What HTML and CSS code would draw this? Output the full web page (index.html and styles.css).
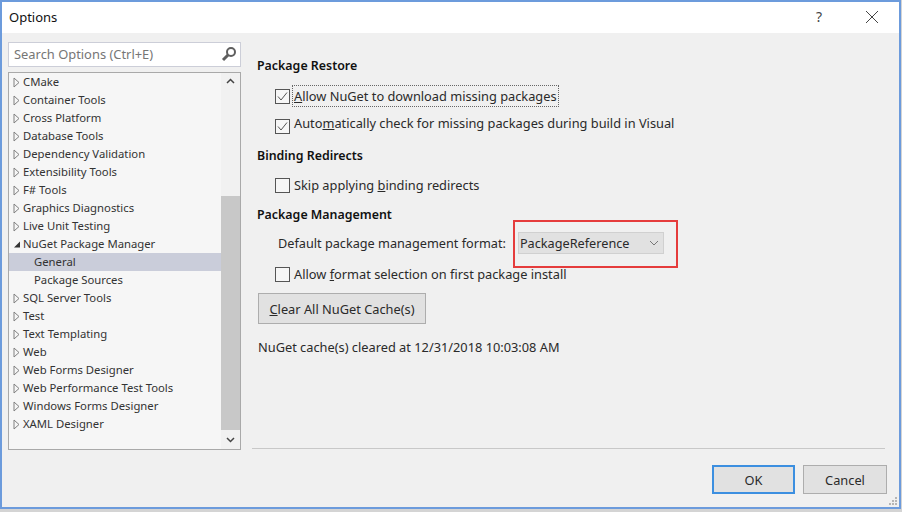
FILE: index.html
```html
<!DOCTYPE html>
<html>
<head>
  <meta charset="utf-8">
  <title>Options</title>
  <link rel="stylesheet" href="styles.css">
</head>
<body>
  <svg class="defs" width="0" height="0">
    <symbol id="tri" viewBox="0 0 7 11"><path d="M1 1L6 5.5L1 10Z" stroke="#808080" stroke-width="1" fill="none"/></symbol>
    <symbol id="tick" viewBox="0 0 13 13"><path d="M2 6.5L5 10L11 2.5" stroke="#555" stroke-width="1" fill="none"/></symbol>
  </svg>
  <div class="dialog">
    <div class="titlebar">
      <span class="title">Options</span>
      <span class="help">?</span>
      <svg class="close" width="14" height="14" viewBox="0 0 14 14"><path d="M1 1L13 13M13 1L1 13" stroke="#444" stroke-width="1" fill="none"/></svg>
    </div>

    <div class="main">
      <div class="sidebar">
        <div class="search">
          <span class="search-text">Search Options (Ctrl+E)</span>
          <svg width="16" height="16" viewBox="0 0 16 16"><circle cx="10" cy="6" r="4" fill="none" stroke="#5f5f5f" stroke-width="2"/><path d="M7 9L2 14" stroke="#5f5f5f" stroke-width="3"/></svg>
        </div>
        <div class="tree">
          <ul class="tree-list">
            <li class="node"><svg class="arrow"><use href="#tri"/></svg>CMake</li>
            <li class="node"><svg class="arrow"><use href="#tri"/></svg>Container Tools</li>
            <li class="node"><svg class="arrow"><use href="#tri"/></svg>Cross Platform</li>
            <li class="node"><svg class="arrow"><use href="#tri"/></svg>Database Tools</li>
            <li class="node"><svg class="arrow"><use href="#tri"/></svg>Dependency Validation</li>
            <li class="node"><svg class="arrow"><use href="#tri"/></svg>Extensibility Tools</li>
            <li class="node"><svg class="arrow"><use href="#tri"/></svg>F# Tools</li>
            <li class="node"><svg class="arrow"><use href="#tri"/></svg>Graphics Diagnostics</li>
            <li class="node"><svg class="arrow"><use href="#tri"/></svg>Live Unit Testing</li>
            <li class="node"><svg class="arrow" viewBox="0 0 7 11"><path d="M1 8.5H7V2.5Z" fill="#333"/></svg>NuGet Package Manager</li>
            <li class="node child selected">General</li>
            <li class="node child">Package Sources</li>
            <li class="node"><svg class="arrow"><use href="#tri"/></svg>SQL Server Tools</li>
            <li class="node"><svg class="arrow"><use href="#tri"/></svg>Test</li>
            <li class="node"><svg class="arrow"><use href="#tri"/></svg>Text Templating</li>
            <li class="node"><svg class="arrow"><use href="#tri"/></svg>Web</li>
            <li class="node"><svg class="arrow"><use href="#tri"/></svg>Web Forms Designer</li>
            <li class="node"><svg class="arrow"><use href="#tri"/></svg>Web Performance Test Tools</li>
            <li class="node"><svg class="arrow"><use href="#tri"/></svg>Windows Forms Designer</li>
            <li class="node"><svg class="arrow"><use href="#tri"/></svg>XAML Designer</li>
          </ul>
          <div class="scrollbar">
            <svg class="scroll-btn" width="19" height="16" viewBox="0 0 19 16"><path d="M6 10L9.5 6.5L13 10" stroke="#444" stroke-width="1.5" fill="none"/></svg>
            <div class="scroll-track"><div class="scroll-thumb"></div></div>
            <svg class="scroll-btn" width="19" height="19" viewBox="0 0 19 19"><path d="M6 8L9.5 11.5L13 8" stroke="#444" stroke-width="1.5" fill="none"/></svg>
          </div>
        </div>
      </div>

      <div class="content">
        <h3 class="heading first">Package Restore</h3>
        <div class="check-row first-check">
          <span class="box"><svg width="13" height="13"><use href="#tick"/></svg></span>
          <span class="focused"><u>A</u>llow NuGet to download missing packages</span>
        </div>
        <div class="check-row second-check">
          <span class="box low"><svg width="13" height="13"><use href="#tick"/></svg></span>
          <span>Auto<u>m</u>atically check for missing packages during build in Visual</span>
        </div>
        <h3 class="heading redirects">Binding Redirects</h3>
        <div class="check-row skip">
          <span class="box"></span>
          <span>Skip applying <u>b</u>inding redirects</span>
        </div>
        <h3 class="heading management">Package Management</h3>
        <div class="format-row">
          <span>Default package management format:</span>
          <div class="combo">
            <span>PackageReference</span>
            <svg width="10" height="6" viewBox="0 0 10 6"><path d="M1 1L5 5L9 1" stroke="#777" stroke-width="1" fill="none"/></svg>
            <div class="callout"></div>
          </div>
        </div>
        <div class="check-row allow-format">
          <span class="box"></span>
          <span>Allow <u>f</u>ormat selection on first package install</span>
        </div>
        <button class="btn clear"><u>C</u>lear All NuGet Cache(s)</button>
        <p class="status">NuGet cache(s) cleared at 12/31/2018 10:03:08 AM</p>
      </div>
    </div>

    <div class="footer">
      <button class="btn action ok">OK</button>
      <button class="btn action">Cancel</button>
      <svg class="grip" width="9" height="9" viewBox="0 0 9 9"><path d="M7 1h2v2H7zM4 4h2v2H4zM7 4h2v2H7zM1 7h2v2H1zM4 7h2v2H4zM7 7h2v2H7z" fill="#b5b5b5"/></svg>
    </div>
  </div>
</body>
</html>
```

FILE: styles.css
```css
* {
  box-sizing: border-box;
}

html, body {
  margin: 0;
  height: 100%;
}

body {
  background: #d4d4d4;
  font-family: "Noto Sans", "Open Sans", sans-serif;
  font-size: 12.8px;
  color: #2a2a2a;
  overflow: hidden;
}

.defs {
  display: block;
  height: 0;
}

.dialog {
  width: 901px;
  height: 509px;
  background: #f0f0f0;
  border: 2px solid #6c9bdc;
  display: flex;
  flex-direction: column;
}

/* title bar */
.titlebar {
  height: 31px;
  flex: none;
  background: #fff;
  display: flex;
  align-items: center;
  padding: 0 20px 2px 7px;
}

.title {
  font-size: 13px;
  color: #111;
  flex: 1;
}

.help {
  font-size: 14px;
  color: #444;
  margin-right: 43px;
}

/* left side */
.main {
  flex: 1;
  display: flex;
  min-height: 0;
}

.sidebar {
  width: 233px;
  margin: 9px 0 0 6px;
  flex: none;
}

.search {
  height: 25px;
  background: #fff;
  border: 1px solid #ccced8;
  display: flex;
  align-items: center;
  justify-content: space-between;
  padding: 0 3px 1px 5px;
  margin-bottom: 5px;
}

.search-text {
  font-size: 12.9px;
  color: #767676;
}

.tree {
  height: 378px;
  background: #f6f6f6;
  border: 1px solid #a9a9a9;
  display: flex;
}

.tree-list {
  flex: 1;
  list-style: none;
  margin: 0;
  padding: 0;
}

.node {
  height: 18px;
  line-height: 18px;
  font-size: 11.3px;
  padding-left: 4px;
  color: #333;
  white-space: nowrap;
  display: flex;
  align-items: center;
}

.node.child {
  padding-left: 25px;
}

.node.selected {
  background: #cacdda;
}

.arrow {
  width: 7px;
  height: 11px;
  flex: none;
  margin-right: 3px;
}

.scrollbar {
  width: 19px;
  flex: none;
  display: flex;
  flex-direction: column;
  background: #f1f1f1;
}

.scroll-btn {
  flex: none;
  display: block;
}

.scroll-track {
  flex: 1;
  display: flex;
  flex-direction: column;
  justify-content: flex-end;
}

.scroll-thumb {
  height: 234px;
  background: #c8c8c8;
}

/* right side */
.content {
  flex: 1;
  padding: 0 0 0 16px;
  min-width: 0;
}

.heading {
  margin: 0;
  height: 18px;
  line-height: 18px;
  font-size: 12.4px;
  font-weight: 600;
  color: #111;
}

.heading.first {
  margin-top: 24px;
}

.heading.redirects {
  margin-top: 15px;
}

.heading.management {
  margin-top: 12px;
}

.check-row {
  display: flex;
  align-items: center;
  padding-left: 18px;
  gap: 4px;
  height: 18px;
  line-height: 18px;
}

.first-check {
  margin-top: 12px;
}

.second-check {
  margin-top: 9px;
}

.skip {
  margin-top: 11px;
}

.allow-format {
  margin-top: 11px;
}

.box {
  width: 15px;
  height: 15px;
  flex: none;
  background: #f6f6f6;
  border: 1px solid #555;
  display: flex;
  align-items: center;
  justify-content: center;
}

.box.low {
  transform: translateY(3px);
}

.focused {
  outline: 1px dotted #666;
  outline-offset: 1px;
}

.format-row {
  display: flex;
  align-items: center;
  margin-top: 8px;
  padding-left: 21px;
  height: 22px;
  font-size: 12.7px;
}

.combo {
  position: relative;
  width: 146px;
  height: 22px;
  margin-left: 12px;
  background: #e1e1e1;
  border: 1px solid #d0d0d0;
  display: flex;
  align-items: center;
  justify-content: space-between;
  padding: 0 4px 0 1px;
}

/* red annotation drawn on top of the screenshot */
.callout {
  position: absolute;
  left: -6px;
  top: -13px;
  width: 165px;
  height: 48px;
  border: 2px solid #e53c3c;
}

.btn {
  font: inherit;
  color: #2a2a2a;
  background: #e1e1e1;
  border: 1px solid #adadad;
  padding: 0;
}

.clear {
  display: block;
  width: 168px;
  height: 31px;
  margin: 10px 0 0 1px;
  padding-top: 1px;
}

.status {
  margin: 14px 0 0 1px;
  line-height: 18px;
}

/* footer */
.footer {
  flex: none;
  height: 59px;
  position: relative;
  display: flex;
  justify-content: flex-end;
  align-items: flex-start;
  gap: 8px;
  padding: 17px 12px 0 0;
}

.footer::before {
  content: "";
  position: absolute;
  left: 250px;
  right: 14px;
  top: 0;
  border-top: 1px solid #c8c8c8;
}

.action {
  width: 84px;
  height: 29px;
}

.action.ok {
  width: 83px;
  border: 2px solid #3c8fe0;
}

.grip {
  position: absolute;
  right: 2px;
  bottom: 2px;
}
```
